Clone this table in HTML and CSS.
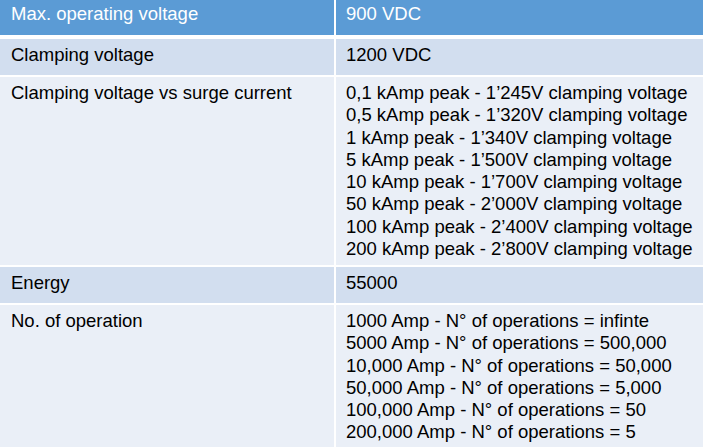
FILE: index.html
```html
<!DOCTYPE html>
<html>
<head>
<meta charset="utf-8">
<link rel="stylesheet" href="styles.css">
</head>
<body>
<div class="spec">
  <div class="row head">
    <div class="cell label">Max. operating voltage</div>
    <div class="cell value">900 VDC</div>
  </div>
  <div class="row band">
    <div class="cell label">Clamping voltage</div>
    <div class="cell value">1200 VDC</div>
  </div>
  <div class="row light tall">
    <div class="cell label">Clamping voltage vs surge current</div>
    <div class="cell value">
      <div>0,1 kAmp peak - 1’245V clamping voltage</div>
      <div>0,5 kAmp peak - 1’320V clamping voltage</div>
      <div>1 kAmp peak - 1’340V clamping voltage</div>
      <div>5 kAmp peak - 1’500V clamping voltage</div>
      <div>10 kAmp peak - 1’700V clamping voltage</div>
      <div>50 kAmp peak - 2’000V clamping voltage</div>
      <div>100 kAmp peak - 2’400V clamping voltage</div>
      <div>200 kAmp peak - 2’800V clamping voltage</div>
    </div>
  </div>
  <div class="row band">
    <div class="cell label">Energy</div>
    <div class="cell value">55000</div>
  </div>
  <div class="row light last">
    <div class="cell label">No. of operation</div>
    <div class="cell value">
      <div>1000 Amp - N° of operations = infinte</div>
      <div>5000 Amp - N° of operations = 500,000</div>
      <div>10,000 Amp - N° of operations = 50,000</div>
      <div>50,000 Amp - N° of operations = 5,000</div>
      <div>100,000 Amp - N° of operations = 50</div>
      <div>200,000 Amp - N° of operations = 5</div>
    </div>
  </div>
</div>
</body>
</html>
```
FILE: styles.css
```css
html, body {
  margin: 0;
  padding: 0;
  background: #ffffff;
}
body {
  width: 703px;
  height: 447px;
  overflow: hidden;
  font-family: "Liberation Sans", Arial, sans-serif;
  font-size: 18.5px;
  line-height: 22.3px;
  color: #000000;
}
.spec {
  display: flex;
  flex-direction: column;
  gap: 2px;
}
.row {
  display: grid;
  grid-template-columns: 334px 1fr;
  column-gap: 2px;
}
.head {
  height: 35px;
  margin-bottom: 2px;
}
.head .cell {
  background: #5b9bd5;
  color: #ffffff;
  padding-top: 3px;
}
.band {
  height: 36px;
}
.band .cell {
  background: #d2deef;
  padding-top: 5px;
}
.light .cell {
  background: #eaeff7;
  padding-top: 5px;
}
.tall {
  height: 188px;
}
.last {
  height: 150px;
}
.cell {
  box-sizing: border-box;
  height: 100%;
  white-space: nowrap;
}
.label {
  padding-left: 11px;
}
.value {
  padding-left: 10px;
}
```
